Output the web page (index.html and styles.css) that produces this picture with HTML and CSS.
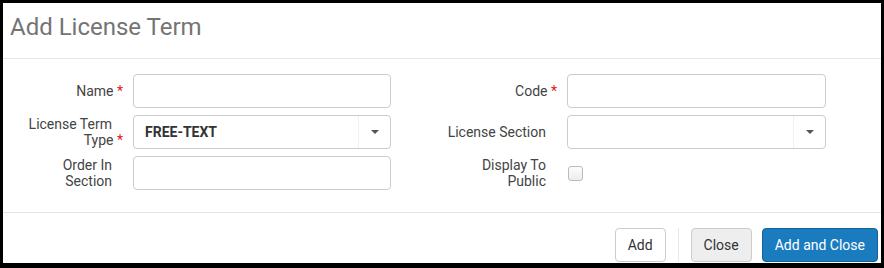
FILE: index.html
```html
<!DOCTYPE html>
<html>
<head>
  <meta charset="UTF-8">
  <title>Add License Term</title>
  <link rel="stylesheet" href="styles.css">
</head>
<body>
  <div class="dialog">
    <div class="dialog-header">
      <h1 class="dialog-title">Add License Term</h1>
    </div>
    <div class="dialog-body">
      <div class="form-grid">
        <label class="field-label"><span class="label-text">Name&nbsp;<span class="req">*</span></span></label>
        <input class="text-input" type="text">
        <label class="field-label right"><span class="label-text">Code&nbsp;<span class="req">*</span></span></label>
        <input class="text-input" type="text">

        <label class="field-label"><span class="label-text">License Term Type&nbsp;<span class="req">*</span></span></label>
        <div class="select-box">
          <span class="select-value">FREE-TEXT</span>
          <span class="select-arrow"><span class="caret"></span></span>
        </div>
        <label class="field-label right"><span class="label-text">License Section</span></label>
        <div class="select-box">
          <span class="select-value"></span>
          <span class="select-arrow"><span class="caret"></span></span>
        </div>

        <label class="field-label"><span class="label-text">Order In Section</span></label>
        <input class="text-input" type="text">
        <label class="field-label right"><span class="label-text">Display To Public</span></label>
        <div class="check-cell">
          <input class="check" type="checkbox">
        </div>
      </div>
    </div>
    <div class="dialog-footer">
      <button class="btn">Add</button>
      <span class="btn-divider"></span>
      <button class="btn btn-grey">Close</button>
      <button class="btn btn-primary">Add and Close</button>
    </div>
  </div>
</body>
</html>
```

FILE: styles.css
```css
html, body {
  margin: 0;
  padding: 0;
}
body {
  font-family: Roboto, "Liberation Sans", Arial, sans-serif;
  font-size: 14px;
  color: #444;
  background: #fff;
}
.dialog {
  box-sizing: border-box;
  width: 884px;
  height: 268px;
  border: 3px solid #000;
  border-bottom-width: 5px;
  overflow: hidden;
  background: #fff;
}
.dialog-header {
  box-sizing: border-box;
  height: 56px;
  padding: 9px 0 0 7px;
  border-bottom: 1px solid #e5e5e5;
}
.dialog-title {
  margin: 0;
  font-size: 24px;
  line-height: 30px;
  font-weight: 400;
  color: #747474;
}
.dialog-body {
  padding: 15px 0 22px 0;
  border-bottom: 1px solid #e5e5e5;
}
.form-grid {
  display: grid;
  grid-template-columns: 130px 258px 176px 259px;
  grid-auto-rows: 34px;
  row-gap: 7px;
}
.field-label {
  display: flex;
  align-items: center;
  padding: 0 21px 0 19px;
  line-height: 16px;
}
.field-label.right {
  padding-left: 54px;
}
.label-text {
  width: 100%;
  text-align: right;
}
.req {
  color: #e8131a;
  margin-right: -11px;
}
.text-input {
  box-sizing: border-box;
  height: 34px;
  margin: 0;
  border: 1px solid #ccc;
  border-radius: 4px;
  background: #fff;
}
.select-box {
  box-sizing: border-box;
  display: flex;
  height: 34px;
  border: 1px solid #ccc;
  border-radius: 4px;
  background: #fff;
}
.select-value {
  flex: 1;
  padding-left: 11px;
  line-height: 32px;
  font-weight: bold;
  color: #333;
}
.select-arrow {
  display: flex;
  align-items: center;
  justify-content: center;
  width: 31px;
  border-left: 1px solid #f1f1f1;
}
.caret {
  width: 0;
  height: 0;
  border-left: 4px solid transparent;
  border-right: 4px solid transparent;
  border-top: 4px solid #555;
}
.check-cell {
  display: flex;
  align-items: center;
}
.check {
  -webkit-appearance: none;
  appearance: none;
  box-sizing: border-box;
  width: 15px;
  height: 15px;
  margin: 1px 0 0 1px;
  border: 1px solid #bbb;
  border-radius: 3px;
  background: linear-gradient(#fdfdfd, #ececec);
}
.dialog-footer {
  display: flex;
  justify-content: flex-end;
  align-items: flex-start;
  padding: 15px 3px 0 0;
}
.btn {
  box-sizing: border-box;
  height: 34px;
  margin: 0;
  padding: 0 12px;
  border: 1px solid #ccc;
  border-radius: 4px;
  background: #fff;
  color: #333;
  font-family: inherit;
  font-size: 14px;
}
.btn-divider {
  width: 1px;
  height: 34px;
  margin: 0 12px 0 12px;
  background: #e8e8e8;
}
.btn-grey {
  background: #eee;
  margin-right: 10px;
}
.btn-primary {
  background: #1a7bbf;
  border-color: #13649d;
  color: #fff;
}
```
